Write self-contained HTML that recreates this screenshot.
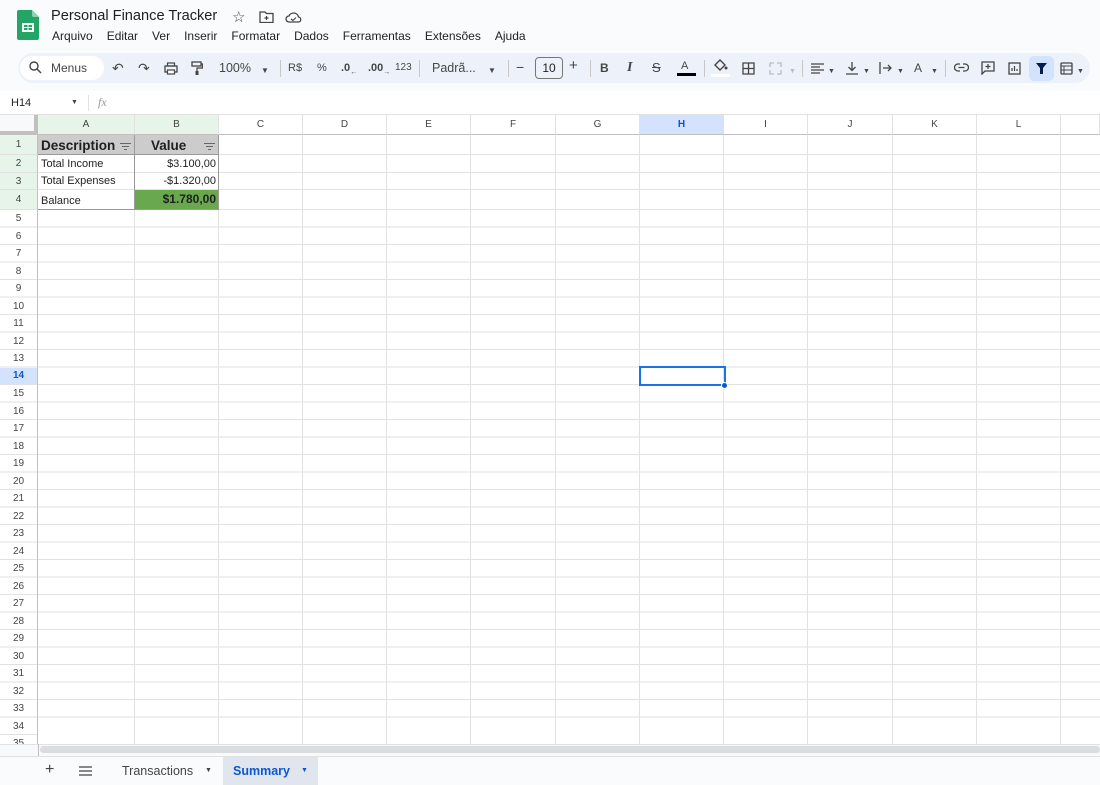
<!DOCTYPE html>
<html><head><meta charset="utf-8"><style>
*{box-sizing:border-box;margin:0;padding:0}
body{width:1100px;height:785px;overflow:hidden;background:#f9fbfd;font-family:"Liberation Sans",Arial,sans-serif;position:relative;color:#1f1f1f}
.a{position:absolute}
.menu span{margin-right:14px}
.tb{position:absolute;top:53px;left:18px;width:1072px;height:30px;background:#edf2fa;border-radius:15px}
.ic{position:absolute;top:61px;font-size:12px;color:#444746;line-height:14px}
.sep{position:absolute;top:60px;width:1px;height:17px;background:#c7c7c7}
.grid{position:absolute;left:0;top:115px;width:1100px;height:629px;background:#fff;overflow:hidden}
.ch{position:absolute;top:0;height:20px;border-right:1px solid #e1e1e1;border-bottom:1px solid #c0c0c0;font-size:10px;color:#444;text-align:center;line-height:20px;background:#fff}
.rh{position:absolute;left:0;width:38px;border-bottom:1px solid #e1e1e1;border-right:1px solid #c0c0c0;font-size:10px;color:#444;text-align:center;background:#fff}
.cell{position:absolute;font-size:11px;line-height:17px;padding:0 3px}
</style></head><body>
<svg class="a" style="left:17px;top:10px" width="22" height="30" viewBox="0 0 22 30"><path d="M2 0h13l7 7v21a2 2 0 0 1-2 2H2a2 2 0 0 1-2-2V2a2 2 0 0 1 2-2z" fill="#23a566"/><path d="M15 0l7 7h-5a2 2 0 0 1-2-2z" fill="#8ed1b1"/><rect x="5" y="13" width="12" height="9" fill="#fff"/><rect x="7" y="15" width="3.5" height="2" fill="#23a566"/><rect x="11.5" y="15" width="3.5" height="2" fill="#23a566"/><rect x="7" y="18" width="3.5" height="2" fill="#23a566"/><rect x="11.5" y="18" width="3.5" height="2" fill="#23a566"/></svg>
<div class="a" style="left:51px;top:8px;font-size:14.6px;color:#1f1f1f">Personal Finance Tracker</div>
<div class="a" style="left:232px;top:8px;font-size:15px;color:#444">☆</div>
<svg class="a" style="left:259px;top:11px" width="15" height="12" viewBox="0 0 15 12"><path d="M1 1h5l1.5 1.5H14v9H1z" fill="none" stroke="#444" stroke-width="1.3"/><path d="M7.5 5v4M5.5 7h4" stroke="#444" stroke-width="1.2"/></svg>
<svg class="a" style="left:285px;top:11px" width="17" height="12" viewBox="0 0 17 12"><path d="M4 11a3 3 0 0 1 0-6 5 5 0 0 1 9.5 1A2.5 2.5 0 0 1 13 11z" fill="none" stroke="#444" stroke-width="1.3"/><path d="M6 8l2 1.5 3-3" fill="none" stroke="#444" stroke-width="1.1"/></svg>
<div class="a menu" style="left:52px;top:29px;font-size:12px;color:#1f1f1f;white-space:nowrap"><span>Arquivo</span><span>Editar</span><span>Ver</span><span>Inserir</span><span>Formatar</span><span>Dados</span><span>Ferramentas</span><span>Extensões</span><span>Ajuda</span></div>
<div class="tb"></div>
<div class="a" style="left:20px;top:56px;width:84px;height:24px;background:#fff;border-radius:12px"></div>
<svg class="a" style="left:29px;top:61px" width="13" height="13" viewBox="0 0 13 13"><circle cx="5" cy="5" r="4" fill="none" stroke="#444" stroke-width="1.4"/><path d="M8 8l4 4" stroke="#444" stroke-width="1.5"/></svg>
<div class="ic" style="left:51px;font-size:12px">Menus</div>
<div class="ic" style="left:112px;font-size:14px">↶</div>
<div class="ic" style="left:138px;font-size:14px">↷</div>
<svg class="a" style="left:164px;top:62px" width="14" height="13" viewBox="0 0 14 13"><rect x="1" y="4" width="12" height="6" fill="none" stroke="#444" stroke-width="1.3"/><rect x="3.5" y="1" width="7" height="3" fill="none" stroke="#444" stroke-width="1.2"/><rect x="3.5" y="8" width="7" height="4" fill="#fff" stroke="#444" stroke-width="1.2"/></svg>
<svg class="a" style="left:191px;top:61px" width="12" height="15" viewBox="0 0 12 15"><rect x="1" y="1" width="9" height="4" fill="none" stroke="#444" stroke-width="1.3"/><path d="M10 3h1.5v4H6v3" fill="none" stroke="#444" stroke-width="1.2"/><rect x="4.5" y="10" width="3" height="4" fill="#444"/></svg>
<div class="ic" style="left:219px;font-size:12.5px">100%</div>
<div class="ic" style="left:261px;font-size:8px;top:64px">▼</div>
<div class="sep" style="left:280px"></div>
<div class="ic" style="left:288px;font-size:11px">R$</div>
<div class="ic" style="left:317px;font-size:11px">%</div>
<div class="ic" style="left:341px;font-size:11px;font-weight:bold">.0<sub style="font-size:7px">←</sub></div>
<div class="ic" style="left:368px;font-size:11px;font-weight:bold">.00<sub style="font-size:7px">→</sub></div>
<div class="ic" style="left:395px;font-size:10px">123</div>
<div class="sep" style="left:419px"></div>
<div class="ic" style="left:432px;font-size:12.5px">Padrã...</div>
<div class="ic" style="left:488px;font-size:8px;top:64px">▼</div>
<div class="sep" style="left:508px"></div>
<div class="ic" style="left:516px;font-size:14px;top:60px">−</div>
<div class="a" style="left:535px;top:57px;width:28px;height:22px;border:1px solid #747775;border-radius:4px;font-size:12px;text-align:center;line-height:20px;color:#1f1f1f">10</div>
<div class="ic" style="left:569px;font-size:15px;top:59px">+</div>
<div class="sep" style="left:590px"></div>
<div class="ic" style="left:600px;font-weight:bold;font-size:12px">B</div>
<div class="ic" style="left:627px;font-style:italic;font-family:'Liberation Serif',serif;font-size:14px;font-weight:bold">I</div>
<div class="ic" style="left:652px;font-size:13px;text-decoration:line-through">S</div>
<div class="ic" style="left:681px;font-size:11px;top:59px">A</div>
<div class="a" style="left:677px;top:73px;width:19px;height:3px;background:#000"></div>
<div class="sep" style="left:704px"></div>
<svg class="a" style="left:713px;top:59px" width="15" height="14" viewBox="0 0 15 14"><path d="M2 6l5-5 5 5-5 5z" fill="none" stroke="#444" stroke-width="1.4"/><circle cx="13" cy="9" r="1.5" fill="#444"/></svg>
<div class="a" style="left:711px;top:74px;width:19px;height:3px;background:#fff"></div>
<svg class="a" style="left:742px;top:62px" width="13" height="13" viewBox="0 0 13 13"><path d="M1 1h11v11H1zM6.5 1v11M1 6.5h11" fill="none" stroke="#444" stroke-width="1.3"/></svg>
<svg class="a" style="left:769px;top:62px" width="13" height="13" viewBox="0 0 13 13"><path d="M1 1h4M8 1h4v4M12 8v4H8M5 12H1V8M1 5V1" fill="none" stroke="#bbb" stroke-width="1.3"/></svg>
<div class="ic" style="left:789px;font-size:7px;top:65px;color:#bbb">▼</div>
<div class="sep" style="left:802px"></div>
<svg class="a" style="left:811px;top:63px" width="13" height="11" viewBox="0 0 13 11"><path d="M0 1h13M0 4h9M0 7h13M0 10h9" stroke="#444" stroke-width="1.3"/></svg>
<div class="ic" style="left:828px;font-size:7px;top:65px">▼</div>
<svg class="a" style="left:846px;top:62px" width="12" height="13" viewBox="0 0 12 13"><path d="M6 0v8M2.5 5L6 8.5 9.5 5M0 12h12" fill="none" stroke="#444" stroke-width="1.3"/></svg>
<div class="ic" style="left:863px;font-size:7px;top:65px">▼</div>
<svg class="a" style="left:879px;top:62px" width="14" height="12" viewBox="0 0 14 12"><path d="M1 0v12M4 6h8M9 3l3 3-3 3" fill="none" stroke="#444" stroke-width="1.3"/></svg>
<div class="ic" style="left:897px;font-size:7px;top:65px">▼</div>
<div class="ic" style="left:914px;font-size:12px">A</div>
<div class="ic" style="left:931px;font-size:7px;top:65px">▼</div>
<div class="sep" style="left:945px"></div>
<svg class="a" style="left:954px;top:63px" width="15" height="9" viewBox="0 0 15 9"><path d="M6 1H4a3.5 3.5 0 0 0 0 7h2M9 1h2a3.5 3.5 0 0 1 0 7H9M4.5 4.5h6" fill="none" stroke="#444" stroke-width="1.3"/></svg>
<svg class="a" style="left:981px;top:61px" width="14" height="14" viewBox="0 0 14 14"><path d="M1 1h12v9H4l-3 3z" fill="none" stroke="#444" stroke-width="1.3"/><path d="M7 3v5M4.5 5.5h5" stroke="#444" stroke-width="1.2"/></svg>
<svg class="a" style="left:1008px;top:62px" width="13" height="13" viewBox="0 0 13 13"><rect x="1" y="1" width="11" height="11" fill="none" stroke="#444" stroke-width="1.3"/><path d="M4 9V6M6.5 9V4M9 9V7" stroke="#444" stroke-width="1.2"/></svg>
<div class="a" style="left:1029px;top:56px;width:25px;height:25px;background:#d3e3fd;border-radius:5px"></div>
<svg class="a" style="left:1036px;top:63px" width="11" height="11" viewBox="0 0 11 11"><path d="M0 0h11L7 5v6H4V5z" fill="#041e49"/></svg>
<svg class="a" style="left:1060px;top:62px" width="13" height="13" viewBox="0 0 13 13"><rect x="1" y="1" width="11" height="11" rx="1" fill="none" stroke="#444" stroke-width="1.3"/><path d="M1 4h11M4 4v8M1 8h11" stroke="#444" stroke-width="1"/></svg>
<div class="ic" style="left:1077px;font-size:7px;top:65px">▼</div>
<div class="a" style="left:0;top:91px;width:1100px;height:24px;background:#fff;border-bottom:1px solid #e1e1e1"></div>
<div class="a" style="left:11px;top:97px;font-size:11px">H14</div>
<div class="a" style="left:71px;top:99px;font-size:7px;color:#444">▼</div>
<div class="a" style="left:88px;top:95px;width:1px;height:16px;background:#e1e1e1"></div>
<div class="a" style="left:98px;top:95px;font-size:12px;color:#999;font-style:italic;font-family:'Liberation Serif',serif">fx</div>
<div class="grid">
<div class="a" style="left:38px;top:95px;width:1062px;height:514px;background:repeating-linear-gradient(to bottom,transparent 0,transparent 16.5px,#e2e2e2 16.5px,#e2e2e2 17.5px)"></div>
<div class="a" style="left:0;top:0;width:1100px;height:629px;background:
linear-gradient(#e2e2e2,#e2e2e2) 134px 0/1px 100% no-repeat,
linear-gradient(#e2e2e2,#e2e2e2) 218px 0/1px 100% no-repeat,
linear-gradient(#e2e2e2,#e2e2e2) 302px 0/1px 100% no-repeat,
linear-gradient(#e2e2e2,#e2e2e2) 386px 0/1px 100% no-repeat,
linear-gradient(#e2e2e2,#e2e2e2) 470px 0/1px 100% no-repeat,
linear-gradient(#e2e2e2,#e2e2e2) 555px 0/1px 100% no-repeat,
linear-gradient(#e2e2e2,#e2e2e2) 639px 0/1px 100% no-repeat,
linear-gradient(#e2e2e2,#e2e2e2) 723px 0/1px 100% no-repeat,
linear-gradient(#e2e2e2,#e2e2e2) 807px 0/1px 100% no-repeat,
linear-gradient(#e2e2e2,#e2e2e2) 892px 0/1px 100% no-repeat,
linear-gradient(#e2e2e2,#e2e2e2) 976px 0/1px 100% no-repeat,
linear-gradient(#e2e2e2,#e2e2e2) 1060px 0/1px 100% no-repeat,
linear-gradient(#e2e2e2,#e2e2e2) 38px 39px/1062px 1px no-repeat,
linear-gradient(#e2e2e2,#e2e2e2) 38px 57px/1062px 1px no-repeat,
linear-gradient(#e2e2e2,#e2e2e2) 38px 74px/1062px 1px no-repeat,
linear-gradient(#e2e2e2,#e2e2e2) 38px 94px/1062px 1px no-repeat"></div>
<div class="a" style="left:0;top:0;width:38px;height:20px;background:#f8f9fa;border-right:4px solid #c0c0c0;border-bottom:4px solid #c0c0c0"></div>
<div class="ch" style="left:38px;width:97px;background:#e6f4ea">A</div>
<div class="ch" style="left:135px;width:84px;background:#e6f4ea">B</div>
<div class="ch" style="left:219px;width:84px">C</div>
<div class="ch" style="left:303px;width:84px">D</div>
<div class="ch" style="left:387px;width:84px">E</div>
<div class="ch" style="left:471px;width:85px">F</div>
<div class="ch" style="left:556px;width:84px">G</div>
<div class="ch" style="left:640px;width:84px;background:#d3e3fd;color:#0b57d0;font-weight:bold">H</div>
<div class="ch" style="left:724px;width:84px">I</div>
<div class="ch" style="left:808px;width:85px">J</div>
<div class="ch" style="left:893px;width:84px">K</div>
<div class="ch" style="left:977px;width:84px">L</div>
<div class="ch" style="left:1061px;width:39px"></div>
<div class="rh" style="top:20px;height:20px;line-height:20px;background:#e6f4ea">1</div>
<div class="rh" style="top:40px;height:18px;line-height:18px;background:#e6f4ea">2</div>
<div class="rh" style="top:58px;height:17px;line-height:17px;background:#e6f4ea">3</div>
<div class="rh" style="top:75px;height:20px;line-height:20px;background:#e6f4ea">4</div>
<div class="a" style="left:0;top:95px;width:38px;font-size:10px;color:#444;text-align:center;line-height:17.5px;border-right:1px solid #c0c0c0;height:534px;background:repeating-linear-gradient(to bottom,#fff 0,#fff 16.5px,#e2e2e2 16.5px,#e2e2e2 17.5px)">5<br>6<br>7<br>8<br>9<br>10<br>11<br>12<br>13<br><span style="display:block;background:#d3e3fd;color:#0b57d0;font-weight:bold;height:16.5px;margin-bottom:1px;line-height:16.5px">14</span>15<br>16<br>17<br>18<br>19<br>20<br>21<br>22<br>23<br>24<br>25<br>26<br>27<br>28<br>29<br>30<br>31<br>32<br>33<br>34<br>35</div>
<div class="a" style="left:38px;top:20px;width:181px;height:20px;background:#cccccc;border-bottom:1px solid #999"></div>
<div class="cell" style="left:38px;top:21px;font-size:13.5px;font-weight:bold;line-height:19px">Description</div>
<svg class="a" style="left:120px;top:28px" width="11" height="7" viewBox="0 0 11 7"><path d="M0 .5h11M2 3.5h7M4 6.5h3" stroke="#666" stroke-width="1"/></svg>
<div class="cell" style="left:148px;top:21px;font-size:13.5px;font-weight:bold;line-height:19px">Value</div>
<svg class="a" style="left:204px;top:28px" width="11" height="7" viewBox="0 0 11 7"><path d="M0 .5h11M2 3.5h7M4 6.5h3" stroke="#666" stroke-width="1"/></svg>
<div class="cell" style="left:38px;top:41px">Total Income</div>
<div class="cell" style="left:135px;top:41px;width:84px;text-align:right">$3.100,00</div>
<div class="cell" style="left:38px;top:58px">Total Expenses</div>
<div class="cell" style="left:135px;top:58px;width:84px;text-align:right">-$1.320,00</div>
<div class="cell" style="left:38px;top:78px">Balance</div>
<div class="a" style="left:135px;top:75px;width:84px;height:20px;background:#6aa84f"></div>
<div class="cell" style="left:135px;top:76px;width:84px;text-align:right;font-weight:bold;font-size:12px">$1.780,00</div>
<div class="a" style="left:134px;top:20px;width:1px;height:75px;background:#999"></div>
<div class="a" style="left:218px;top:20px;width:1px;height:75px;background:#999"></div>
<div class="a" style="left:38px;top:94px;width:181px;height:1px;background:#999"></div>
<div class="a" style="left:640px;top:252px;width:85px;height:18px;border:1px solid #1a73e8;outline:1px solid #1a73e8"></div>
<div class="a" style="left:721px;top:267px;width:7px;height:7px;border-radius:50%;background:#0b57d0;border:1px solid #fff"></div>
</div>
<div class="a" style="left:0;top:744px;width:1100px;height:12px;background:#f8f9fa;border-top:1px solid #e1e1e1"></div>
<div class="a" style="left:38px;top:744px;width:1px;height:12px;background:#c0c0c0"></div>
<div class="a" style="left:40px;top:746px;width:1060px;height:7px;background:#dadce0;border-radius:4px"></div>
<div class="a" style="left:0;top:756px;width:1100px;height:29px;background:#f9fbfd;border-top:1px solid #e1e1e1"></div>
<div class="a" style="left:45px;top:761px;font-size:16px;color:#444">+</div>
<svg class="a" style="left:79px;top:766px" width="13" height="10" viewBox="0 0 13 10"><path d="M0 1h13M0 5h13M0 9h13" stroke="#444" stroke-width="1.3"/></svg>
<div class="a" style="left:122px;top:764px;font-size:12.5px;color:#444">Transactions</div>
<div class="a" style="left:205px;top:767px;font-size:7px;color:#444">▼</div>
<div class="a" style="left:223px;top:757px;width:95px;height:28px;background:#e1e5ee"></div>
<div class="a" style="left:233px;top:764px;font-size:12.5px;color:#0b57d0;font-weight:bold">Summary</div>
<div class="a" style="left:301px;top:767px;font-size:7px;color:#0b57d0">▼</div>
</body></html>
